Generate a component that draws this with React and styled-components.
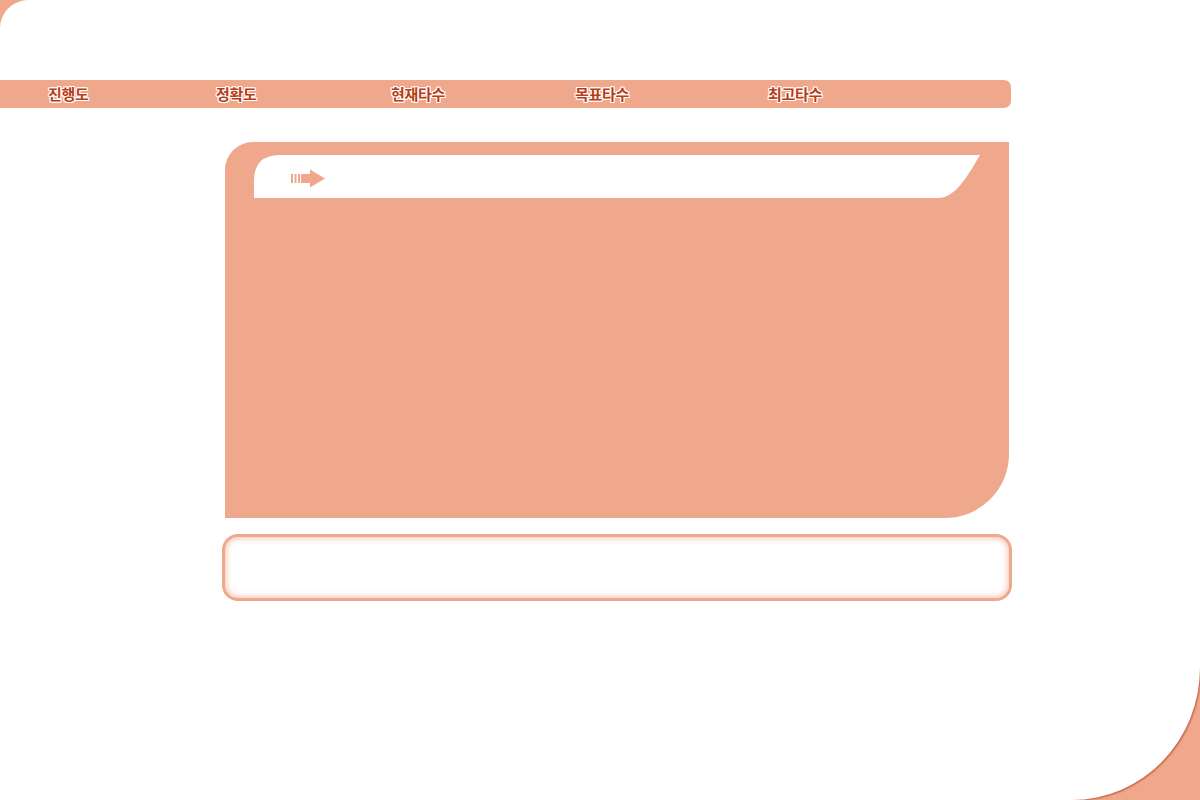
import styled, { createGlobalStyle } from "styled-components";

const GlobalStyle = createGlobalStyle`
  html, body {
    margin: 0;
    padding: 0;
    background: #f0a88c;
    font-family: "Noto Sans CJK KR", "Noto Sans", sans-serif;
  }
`;

const Page = styled.div`
  width: 1200px;
  height: 800px;
  box-sizing: border-box;
  background: #fff;
  border-radius: 28px 0 128px 0 / 28px 0 132px 0;
  box-shadow: 1px 1px 2px rgba(170, 60, 30, 0.7);
  padding-top: 80px;
  overflow: hidden;
`;

const StatBar = styled.div`
  width: 1011px;
  height: 28px;
  background: #f0a88c;
  border-radius: 0 7px 7px 0;
  display: grid;
  grid-template-columns: 168px 175px 184px 193px auto;
  align-items: center;
  padding-left: 48px;
  box-sizing: border-box;
`;

const StatLabel = styled.span`
  font-size: 15px;
  font-weight: 700;
  color: #b83c16;
  letter-spacing: -0.3px;
  line-height: 28px;
  text-shadow: 1px 0 0 #fff, -1px 0 0 #fff, 0 1px 0 #fff, 0 -1px 0 #fff,
    1px 1px 0 #fff, -1px -1px 0 #fff, 1px -1px 0 #fff, -1px 1px 0 #fff;
`;

const Board = styled.div`
  margin: 34px 0 0 225px;
  width: 784px;
  height: 376px;
  background: #f0a88c;
  border-radius: 28px 0 64px 0;
  padding: 13px 0 0 29px;
  box-sizing: border-box;
`;

const Tab = styled.div`
  width: 726px;
  height: 43px;
  background: #fff;
  clip-path: path("M 0 43 L 0 26 Q 0 0 26 0 L 726 0 C 714 20, 702 43, 684 43 Z");
  display: flex;
  align-items: center;
  padding: 4px 0 0 37px;
  box-sizing: border-box;
`;

const InputBox = styled.div`
  margin: 16px 0 0 222px;
  width: 790px;
  height: 67px;
  box-sizing: border-box;
  border: 3px solid #f0a88c;
  border-radius: 16px;
  background: #fff;
  box-shadow: inset 0 0 6px 1px rgba(240, 168, 140, 0.75);
`;

const Arrow = () => (
  <svg width="36" height="20" viewBox="0 0 36 20">
    <rect x="0" y="5" width="2" height="9" fill="#f0a88c" />
    <rect x="3.5" y="5" width="2" height="9" fill="#f0a88c" />
    <rect x="7" y="5" width="2" height="9" fill="#f0a88c" />
    <polygon points="10,5 19,5 19,0.5 34,9.5 19,18.5 19,14 10,14" fill="#f0a88c" />
  </svg>
);

const labels = ["진행도", "정확도", "현재타수", "목표타수", "최고타수"];

export default function App() {
  return (
    <>
      <GlobalStyle />
      <Page>
        <StatBar>
          {labels.map((l) => (
            <StatLabel key={l}>{l}</StatLabel>
          ))}
        </StatBar>
        <Board>
          <Tab>
            <Arrow />
          </Tab>
        </Board>
        <InputBox />
      </Page>
    </>
  );
}
